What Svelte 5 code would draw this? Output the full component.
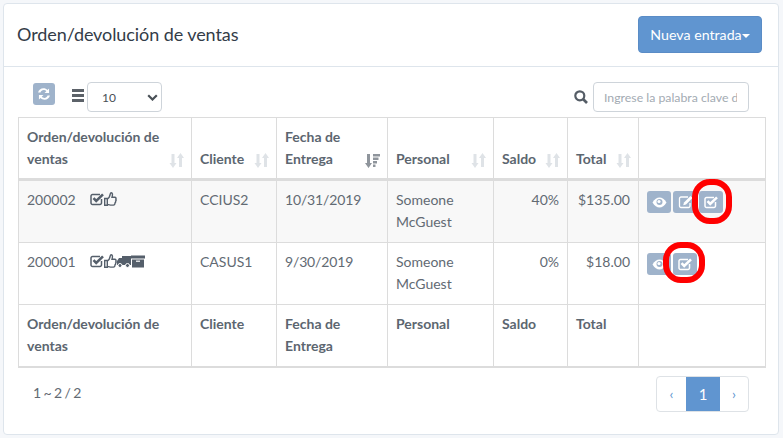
<script>
  let columns = [
    { label: "Orden/devolución de ventas", width: 173 },
    { label: "Cliente", width: 85 },
    { label: "Fecha de Entrega", width: 111, sorted: true },
    { label: "Personal", width: 106 },
    { label: "Saldo", width: 74 },
    { label: "Total", width: 71 },
    { label: "", width: 127 }
  ];

  let rows = [
    { id: "200002", client: "CCIUS2", date: "10/31/2019", saldo: "40%", total: "$135.00", truck: false },
    { id: "200001", client: "CASUS1", date: "9/30/2019", saldo: "0%", total: "$18.00", truck: true }
  ];
</script>

{#snippet check(size)}
  <svg width={size} height={size} viewBox="0 0 14 14">
    <path d="M11.500 7v4a1.500 1.500 0 0 1-1.500 1.500H2.500A1.500 1.500 0 0 1 1 11V4a1.500 1.500 0 0 1 1.500-1.500H10" fill="none" stroke="currentColor" stroke-width="1.500" />
    <path d="M3.500 6.200l2.700 2.700L13 2.400" fill="none" stroke="currentColor" stroke-width="2.600" />
  </svg>
{/snippet}

{#snippet thumb()}
  <svg width="13" height="14" viewBox="0 0 13 14">
    <path d="M.7 6.500h2.600v6.800H.7zM3.300 7c1.600-.8 2.500-2.500 3-5.200.1-.8.500-1.100 1-1.100 1.200 0 1.500 1.800.7 4.600h2.800c1.100 0 1.500 1 1 1.800.5.700.4 1.500-.2 2 .2.800 0 1.400-.6 1.700.1 1.100-.5 2.300-1.600 2.300H6.500c-1.300 0-2.200-.5-3.200-.7" fill="none" stroke="currentColor" stroke-width="1.400" />
  </svg>
{/snippet}

{#snippet sortIcon(active)}
  <svg class="sort" class:active width="15" height="15" viewBox="0 0 15 15">
    {#if active}
      <path d="M2 1h3v9h2l-3.500 5L0 10h2z" fill="currentColor" />
      <path d="M8 1h7v2.500H8zM8 4.500h5.500V7H8zM8 8h4v2.500H8zM8 11.500h2.500V14H8z" fill="currentColor" />
    {:else}
      <path d="M2.500 1h3v9h2L4 15 .5 10h2z" fill="currentColor" />
      <path d="M10 14h3V5h2L11.500 0 8 5h2z" fill="currentColor" />
    {/if}
  </svg>
{/snippet}

{#snippet actionIcon(kind)}
  <button class="act">
    {#if kind === "eye"}
      <svg width="15" height="11" viewBox="0 0 15 11">
        <path d="M.5 5.500C2.500 2 5 .5 7.500.5s5 1.500 7 5c-2 3.500-4.500 5-7 5s-5-1.500-7-5z" fill="currentColor" />
        <circle cx="7.500" cy="5" r="3" fill="#9fb3cb" />
        <circle cx="7" cy="4.500" r="1.600" fill="currentColor" />
      </svg>
    {:else if kind === "edit"}
      <svg width="15" height="14" viewBox="0 0 15 14">
        <path d="M10 2H3a1.500 1.500 0 0 0-1.500 1.500V11A1.500 1.500 0 0 0 3 12.500h7.500A1.500 1.500 0 0 0 12 11V8" fill="none" stroke="currentColor" stroke-width="1.300" />
        <path d="M12.500 1l2 2-6.500 6.500-2.800.8.800-2.800z" fill="currentColor" />
      </svg>
    {:else}
      {@render check(14)}
    {/if}
  </button>
{/snippet}

<div class="card">
  <header>
    <h1>Orden/devolución de ventas</h1>
    <button class="new">Nueva entrada<span class="caret"></span></button>
  </header>

  <div class="body">
    <div class="toolbar">
      <div class="left">
        <button class="refresh" aria-label="Recargar">
          <svg width="14" height="14" viewBox="0 0 13 13">
            <path d="M1 5.200C1.500 2.800 3.500 1.200 6 1.200c1.500 0 2.800.6 3.700 1.500L11.200 1.300v4.200H7l1.600-1.600c-.6-.7-1.500-1-2.500-1-1.300 0-2.400.8-2.900 2.300zM12 7.800c-.5 2.400-2.500 4-5 4-1.500 0-2.800-.6-3.700-1.500l-1.500 1.400V7.500H6L4.400 9.100c.6.7 1.500 1 2.500 1 1.300 0 2.400-.8 2.900-2.300z" fill="currentColor" />
          </svg>
        </button>
        <span class="bars"><i></i><i></i><i></i></span>
        <div class="select">10
          <svg width="11" height="7" viewBox="0 0 11 7"><path d="M1.200 1.200l4.300 4.300 4.300-4.300" fill="none" stroke="currentColor" stroke-width="2.200" /></svg>
        </div>
      </div>
      <div class="right">
        <svg class="search" width="14" height="14" viewBox="0 0 14 14">
          <circle cx="5.800" cy="5.800" r="4.500" fill="none" stroke="currentColor" stroke-width="2.200" />
          <path d="M9 9l4 4" stroke="currentColor" stroke-width="2.600" />
        </svg>
        <input placeholder="Ingrese la palabra clave de búsqueda" />
      </div>
    </div>

    <table>
      <colgroup>
        {#each columns as col}
          <col style="width: {col.width}px" />
        {/each}
      </colgroup>
      <thead>
        <tr>
          {#each columns as col}
            <th>
              {col.label}
              {#if col.label}{@render sortIcon(col.sorted)}{/if}
            </th>
          {/each}
        </tr>
      </thead>
      <tbody>
        {#each rows as row, i}
          <tr class:odd={i === 0}>
            <td>
              <div class="order">
                <span class="num">{row.id}</span>
                <span class="flags">
                  {@render check(14)}
                  {@render thumb()}
                  {#if row.truck}
                    <svg width="14" height="13" viewBox="0 0 14 13">
                      <path d="M5 1h9v9H5zM0 6l2-3h3v7H0z" fill="currentColor" />
                      <circle cx="3" cy="10.500" r="2" fill="currentColor" stroke="#fff" />
                      <circle cx="10.500" cy="10.500" r="2" fill="currentColor" stroke="#fff" />
                    </svg>
                    <svg width="14" height="13" viewBox="0 0 14 13">
                      <path d="M0 .5h14v3H0zM1 4.500h12v8H1z" fill="currentColor" />
                      <path d="M5 6.200h4" stroke="#fff" stroke-width="1.200" />
                    </svg>
                  {/if}
                </span>
              </div>
            </td>
            <td>{row.client}</td>
            <td class="date">{row.date}</td>
            <td>Someone McGuest</td>
            <td class="num-cell">{row.saldo}</td>
            <td class="num-cell">{row.total}</td>
            <td>
              <div class="actions">
                {@render actionIcon("eye")}
                {#if i === 0}
                  {@render actionIcon("edit")}
                {/if}
                <span class="ringed">
                  {@render actionIcon("check")}
                  <span class="ring" class:second={i === 1}></span>
                </span>
              </div>
            </td>
          </tr>
        {/each}
      </tbody>
      <tfoot>
        <tr>
          {#each columns as col}
            <th>{col.label}</th>
          {/each}
        </tr>
      </tfoot>
    </table>

    <div class="bottom">
      <span class="count">1 ~ 2 / 2</span>
      <div class="pager">
        <span>‹</span>
        <span class="current">1</span>
        <span class="next">›</span>
      </div>
    </div>
  </div>
</div>

<style>
  :global(body) {
    background: #f5f7fa;
    font-family: "Lato", sans-serif;
  }

  .card {
    width: 774px;
    height: 430px;
    margin: 3px 0 0 3px;
    background: #fff;
    border: 1px solid #dee5ec;
    border-radius: 4px;
  }

  header {
    height: 61px;
    display: flex;
    align-items: center;
    justify-content: space-between;
    padding: 0 16px 1px 13px;
    border-bottom: 1px solid #dee5ec;
  }

  h1 {
    margin: 0 0 2px;
    font-size: 18px;
    font-weight: 400;
    letter-spacing: -0.08px;
    color: #333c48;
  }

  .new {
    width: 124px;
    height: 37px;
    padding: 0;
    background: #6095d0;
    border: 1px solid #5a8cc6;
    border-radius: 4px;
    color: #fff;
    font: 400 14.2px "Lato", sans-serif;
  }

  .caret {
    display: inline-block;
    vertical-align: middle;
    border-top: 4px solid #fff;
    border-left: 4px solid transparent;
    border-right: 4px solid transparent;
  }

  .body {
    padding: 15px 13px 0 14px;
  }

  .toolbar {
    display: flex;
    justify-content: space-between;
    height: 35px;
    padding: 0 16px 0 15px;
  }

  .left, .right {
    display: flex;
    align-items: flex-start;
  }

  .refresh {
    width: 22px;
    height: 22px;
    padding: 0;
    margin: 1px 17px 0 0;
    border: 0;
    border-radius: 3px;
    background: #9fb3cb;
    color: #fff;
    display: flex;
    align-items: center;
    justify-content: center;
  }

  .bars {
    display: flex;
    flex-direction: column;
    gap: 2px;
    margin-top: 7px;
  }

  .bars i {
    display: block;
    width: 12px;
    height: 3px;
    background: #5c6269;
  }

  .select {
    width: 75px;
    height: 30px;
    margin-left: 3px;
    box-sizing: border-box;
    padding: 0 3px 0 14px;
    border: 1px solid #ced4da;
    border-radius: 4px;
    display: flex;
    align-items: center;
    justify-content: space-between;
    font-size: 12px;
    color: #495057;
  }

  .search {
    color: #555d66;
    margin: 8px 5px 0 0;
  }

  input {
    width: 156px;
    height: 30px;
    box-sizing: border-box;
    padding: 0 11px 0 10px;
    border: 1px solid #ced4da;
    border-radius: 4px;
    font: 12.3px "Lato", sans-serif;
  }

  input::placeholder {
    color: #a3abb3;
    opacity: 1;
  }

  table {
    width: 747px;
    table-layout: fixed;
    border-collapse: collapse;
    font-size: 14px;
    color: #626a73;
    line-height: 22px;
  }

  th, td {
    padding: 8px;
    border: 1px solid #dcdcdc;
    vertical-align: top;
    text-align: left;
  }

  th {
    color: #5c6670;
    font-weight: 700;
    position: relative;
  }

  thead th {
    vertical-align: bottom;
    height: 60px;
    box-sizing: border-box;
    border-bottom: 3px solid #dcdcdc;
    padding-right: 22px;
  }

  tfoot th {
    height: 62px;
    box-sizing: border-box;
    border-bottom: 2px solid #dcdcdc;
  }

  tbody td {
    height: 62px;
    box-sizing: border-box;
  }

  tbody .odd td {
    height: 63px;
    background: #f8f8f8;
  }

  .date {
    letter-spacing: -0.15px;
  }

  .sort {
    position: absolute;
    right: 7px;
    bottom: 10px;
    color: #dfe3e7;
  }

  .sort.active {
    color: #8f959c;
  }

  .order {
    display: flex;
    align-items: flex-start;
  }

  .num {
    width: 63px;
  }

  .flags {
    display: flex;
    align-items: center;
    height: 20px;
    color: #555f6b;
  }

  .num-cell {
    text-align: right;
  }

  .actions {
    display: flex;
    gap: 2px;
    margin-top: 2px;
  }

  .act {
    width: 24px;
    height: 22px;
    padding: 0;
    border: 0;
    border-radius: 3px;
    background: #9fb3cb;
    color: #fff;
    display: flex;
    align-items: center;
    justify-content: center;
  }

  .ringed {
    position: relative;
    display: block;
  }

  .ring {
    position: absolute;
    left: -7px;
    top: -12px;
    width: 40px;
    height: 45px;
    box-sizing: border-box;
    border: 6px solid #f00;
    border-radius: 18px;
  }

  .ring.second {
    left: -10px;
    top: -11px;
    width: 42px;
    height: 41px;
    border-radius: 18px;
  }

  .bottom {
    display: flex;
    justify-content: space-between;
    align-items: flex-start;
    padding: 8px 16px 0 15px;
    font-size: 14px;
    color: #626a73;
  }

  .count {
    margin-top: 8px;
    word-spacing: -1.2px;
  }

  .pager {
    display: flex;
    height: 36px;
    box-sizing: border-box;
    border: 1px solid #dee2e6;
    border-radius: 4px;
    overflow: hidden;
  }

  .pager span {
    width: 29px;
    display: flex;
    align-items: center;
    justify-content: center;
    color: #6095d0;
  }

  .pager .next {
    width: 28px;
  }

  .pager .current {
    width: 34px;
    background: #6095d0;
    color: #fff;
    font-size: 15px;
  }
</style>
